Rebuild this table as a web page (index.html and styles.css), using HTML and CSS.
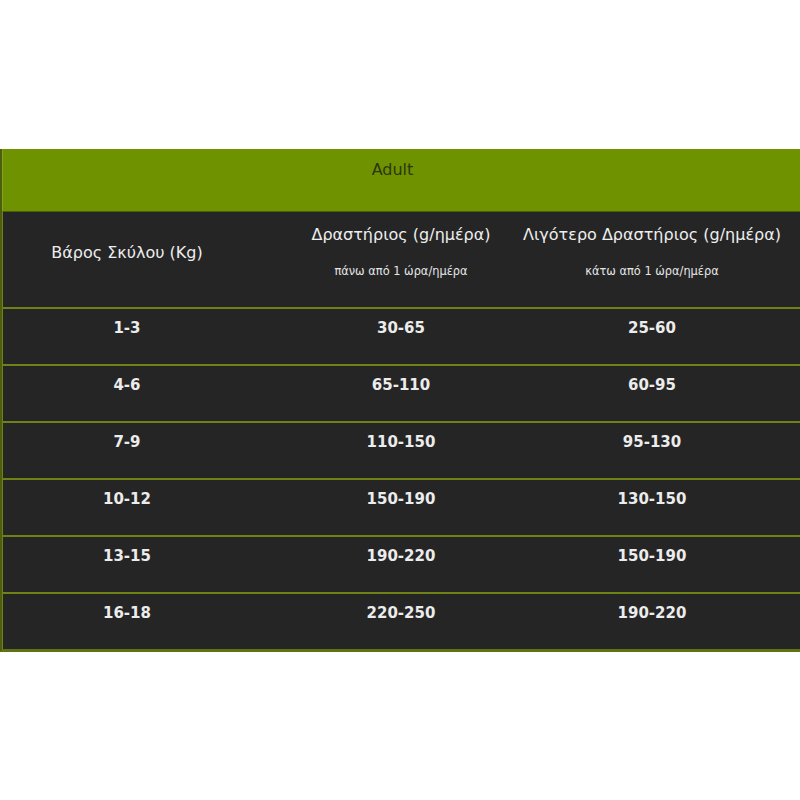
FILE: index.html
```html
<!DOCTYPE html>
<html lang="el">
<head>
<meta charset="utf-8">
<title>Adult</title>
<link rel="stylesheet" href="styles.css">
</head>
<body>
<div class="table">
  <div class="title">Adult</div>
  <div class="row head">
    <div class="cell c1">Βάρος Σκύλου (Kg)</div>
    <div class="cell c2"><div class="h">Δραστήριος (g/ημέρα)</div><div class="sub">πάνω από 1 ώρα/ημέρα</div></div>
    <div class="cell c3"><div class="h">Λιγότερο Δραστήριος (g/ημέρα)</div><div class="sub">κάτω από 1 ώρα/ημέρα</div></div>
  </div>
  <div class="row data"><div class="cell">1-3</div><div class="cell">30-65</div><div class="cell c3">25-60</div></div>
  <div class="row data"><div class="cell">4-6</div><div class="cell">65-110</div><div class="cell c3">60-95</div></div>
  <div class="row data"><div class="cell">7-9</div><div class="cell">110-150</div><div class="cell c3">95-130</div></div>
  <div class="row data"><div class="cell">10-12</div><div class="cell">150-190</div><div class="cell c3">130-150</div></div>
  <div class="row data"><div class="cell">13-15</div><div class="cell">190-220</div><div class="cell c3">150-190</div></div>
  <div class="row data"><div class="cell">16-18</div><div class="cell">220-250</div><div class="cell c3">190-220</div></div>
</div>
</body>
</html>
```
FILE: styles.css
```css
html, body { margin: 0; padding: 0; background: #ffffff; }
body { font-family: "DejaVu Sans", Verdana, sans-serif; }
.table {
  margin-top: 149px;
  width: 800px;
  background: #252525;
  border-left: 2px solid #4d5f0c;
  box-sizing: border-box;
  border-bottom: 3px solid #5f7314;
}
.title {
  background: #6f9300;
  color: #2b370c;
  text-align: center;
  font-size: 16px;
  height: 62px;
  box-sizing: border-box;
  padding-top: 11px;
  padding-right: 18px;
  line-height: 19px;
  border-left: 1px solid #85a41c;
}
.row {
  display: grid;
  grid-template-columns: 248px 300px 250px;
  border-left: 1px solid #6f8216;
}
.row + .row { border-top: 2px solid #6f8216; }
.head { height: 95px; align-items: start; border-top: 1px solid #4d5f0c; }
.cell {
  display: flex;
  flex-direction: column;
  align-items: center;
  color: #eeeeee;
  white-space: nowrap;
}
.c3 { padding-right: 48px; }
.head .cell { font-size: 16px; }
.head .c1 { padding-top: 31px; line-height: 19px; }
.head .c2, .head .c3 { padding-top: 13px; }
.head .h { line-height: 19px; }
.head .sub { font-size: 11.4px; margin-top: 20px; line-height: 14px; color: #e6e6e6; }
.data { height: 55px; }
.data .cell { font-size: 15px; font-weight: bold; padding-top: 10px; line-height: 18px; color: #ececec; }
```
